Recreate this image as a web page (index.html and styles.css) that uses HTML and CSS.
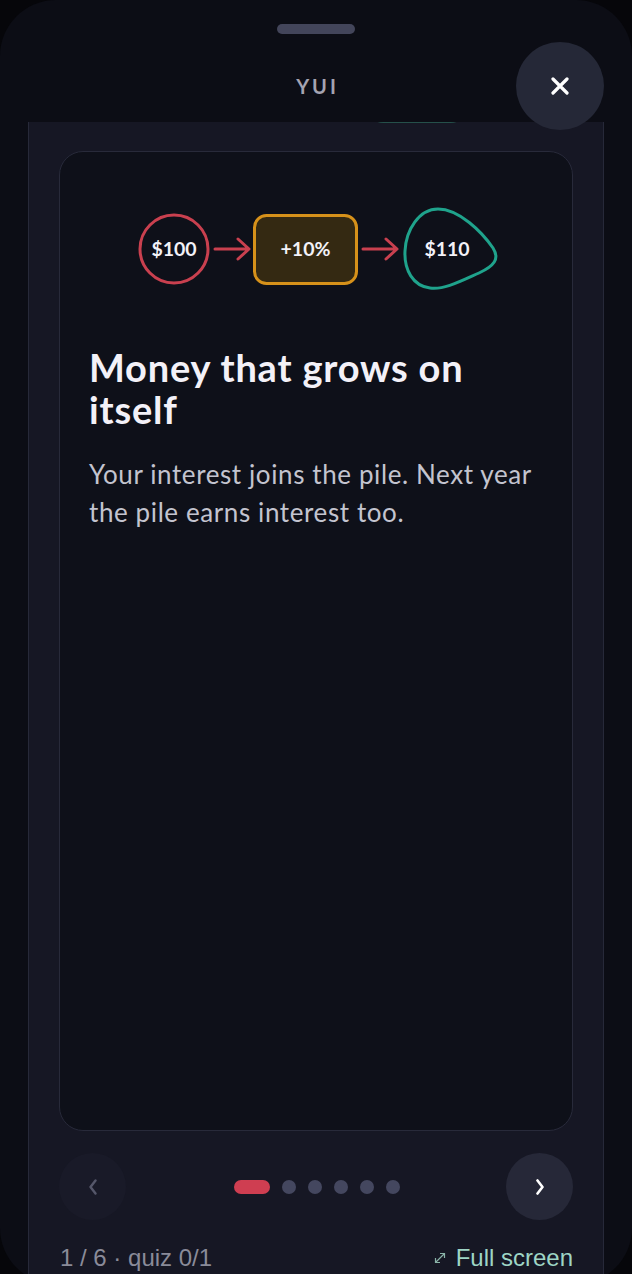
FILE: index.html
```html
<!DOCTYPE html>
<html lang="en">
<head>
<meta charset="utf-8">
<title>YUI</title>
<link rel="stylesheet" href="styles.css">
</head>
<body>
<div class="sheet">
  <div class="grab"></div>
  <header class="top"><span class="brand">YUI</span></header>
  <button class="close" aria-label="Close">
    <svg width="18" height="18" viewBox="0 0 18 18"><path d="M2 2 L16 16 M16 2 L2 16" stroke="#ffffff" stroke-width="3.2" stroke-linecap="round"/></svg>
  </button>
  <main class="panel">
    <div class="peek"><span class="peek-pill"></span></div>
    <article class="card">
      <svg class="diagram" width="360" height="90" viewBox="0 0 360 90">
        <circle cx="36" cy="44" r="34" fill="none" stroke="#c9404f" stroke-width="3"/>
        <text x="36" y="51" class="dlabel">$100</text>
        <path d="M77 44 H110 M100 34 L111 44 L100 54" fill="none" stroke="#c9404f" stroke-width="3" stroke-linecap="round" stroke-linejoin="round"/>
        <rect x="116.5" y="10.5" width="102" height="68" rx="12" fill="#342912" stroke="#d6911a" stroke-width="3"/>
        <text x="167.5" y="51" class="dlabel">+10%</text>
        <path d="M225 44 H258 M248 34 L259 44 L248 54" fill="none" stroke="#c9404f" stroke-width="3" stroke-linecap="round" stroke-linejoin="round"/>
        <path d="M300 4 C321 4 344 27 355 43 C362 54 356 61 341 68 C323 76 306 85 292 83 C275 81 266 65 267 46 C268 25 281 4 300 4 Z" fill="none" stroke="#1fa38c" stroke-width="3"/>
        <text x="309" y="51" class="dlabel">$110</text>
      </svg>
      <h1 class="title">Money that grows on itself</h1>
      <p class="body">Your interest joins the pile. Next year the pile earns interest too.</p>
    </article>
    <nav class="pager">
      <button class="nav prev" aria-label="Previous">
        <svg width="10" height="16" viewBox="0 0 10 16"><path d="M7.5 1.5 L2.5 8 L7.5 14.5" fill="none" stroke="#55576a" stroke-width="2.4" stroke-linecap="round" stroke-linejoin="round"/></svg>
      </button>
      <div class="dots">
        <span class="dot active"></span>
        <span class="dot"></span>
        <span class="dot"></span>
        <span class="dot"></span>
        <span class="dot"></span>
        <span class="dot"></span>
      </div>
      <button class="nav next" aria-label="Next">
        <svg width="10" height="16" viewBox="0 0 10 16"><path d="M2.5 1.5 L7.5 8 L2.5 14.5" fill="none" stroke="#ffffff" stroke-width="2.6" stroke-linecap="round" stroke-linejoin="round"/></svg>
      </button>
    </nav>
    <footer class="meta">
      <span class="count">1 / 6 · quiz 0/1</span>
      <a class="full">
        <svg width="12" height="12" viewBox="0 0 12 12"><path d="M1.5 10.5 L10.5 1.5 M6 1.5 H10.5 V6 M1.5 6 V10.5 H6" fill="none" stroke="#8ab3a8" stroke-width="1.2"/></svg>
        <span>Full screen</span>
      </a>
    </footer>
  </main>
</div>
</body>
</html>
```
FILE: styles.css
```css
html, body {
  margin: 0;
  padding: 0;
}
body {
  width: 632px;
  height: 1274px;
  overflow: hidden;
  background: #06060a;
  font-family: "Lato", "Noto Sans", sans-serif;
}
.sheet {
  position: relative;
  width: 632px;
  height: 1284px;
  border-radius: 56px;
  background: #0c0d15;
  display: flex;
  flex-direction: column;
  overflow: hidden;
}
.grab {
  width: 78px;
  height: 10px;
  border-radius: 5px;
  background: #43455a;
  margin: 24px auto 0;
  flex: none;
}
.top {
  height: 88px;
  box-sizing: border-box;
  padding-top: 16px;
  display: flex;
  align-items: center;
  justify-content: center;
  flex: none;
}
.brand {
  font-size: 20px;
  font-weight: 700;
  letter-spacing: 3px;
  color: #a4a3b1;
  margin-left: 3px;
}
.close {
  position: absolute;
  left: 516px;
  top: 42px;
  width: 88px;
  height: 88px;
  border: none;
  border-radius: 50%;
  background: #252837;
  display: flex;
  align-items: center;
  justify-content: center;
  padding: 0;
  z-index: 2;
}
.panel {
  flex: 1;
  margin: 0 28px;
  background: #161724;
  border-left: 1px solid #272939;
  border-right: 1px solid #272939;
  padding: 0 30px;
  display: flex;
  flex-direction: column;
  overflow: hidden;
}
.peek {
  height: 29px;
  flex: none;
  display: flex;
  align-items: flex-start;
}
.peek-pill {
  margin-top: -29px;
  margin-left: 309px;
  width: 98px;
  height: 30px;
  box-sizing: border-box;
  border: 2px solid #25504a;
  border-radius: 15px;
  background: #12302c;
}
.card {
  flex: none;
  height: 980px;
  box-sizing: border-box;
  border: 1px solid #282a3a;
  border-radius: 24px;
  background: #0e1019;
  padding: 53px 29px 0;
}
.diagram {
  display: block;
  margin: 0 0 0 49px;
  overflow: visible;
}
.dlabel {
  font-family: "Lato", "Noto Sans", sans-serif;
  font-weight: 700;
  font-size: 19.5px;
  fill: #f3f2f8;
  text-anchor: middle;
}
.title {
  margin: 51px 0 0;
  font-size: 38px;
  line-height: 42px;
  font-weight: 700;
  letter-spacing: 0.8px;
  color: #f3f1f8;
}
.body {
  margin: 25px 0 0;
  font-size: 26px;
  line-height: 38px;
  font-weight: 400;
  letter-spacing: 0.6px;
  color: #c3c4cf;
}
.pager {
  flex: none;
  margin-top: 22px;
  height: 67px;
  display: flex;
  align-items: center;
  justify-content: space-between;
}
.nav {
  width: 67px;
  height: 67px;
  border: none;
  border-radius: 50%;
  padding: 0;
  display: flex;
  align-items: center;
  justify-content: center;
}
.prev {
  background: #191a28;
}
.next {
  background: #262838;
}
.dots {
  display: flex;
  align-items: center;
  gap: 12px;
  margin-left: 2px;
}
.dot {
  width: 14px;
  height: 14px;
  border-radius: 7px;
  background: #44475f;
}
.dot.active {
  width: 36px;
  background: #cf3e51;
}
.meta {
  flex: none;
  margin-top: 24px;
  display: flex;
  align-items: center;
  justify-content: space-between;
  font-family: "Liberation Sans", Arial, sans-serif;
  font-size: 24px;
  line-height: 28px;
}
.count {
  color: #8a8b99;
  margin-left: 1px;
}
.full {
  display: flex;
  align-items: center;
  gap: 10px;
  color: #9ed5c5;
}
```
